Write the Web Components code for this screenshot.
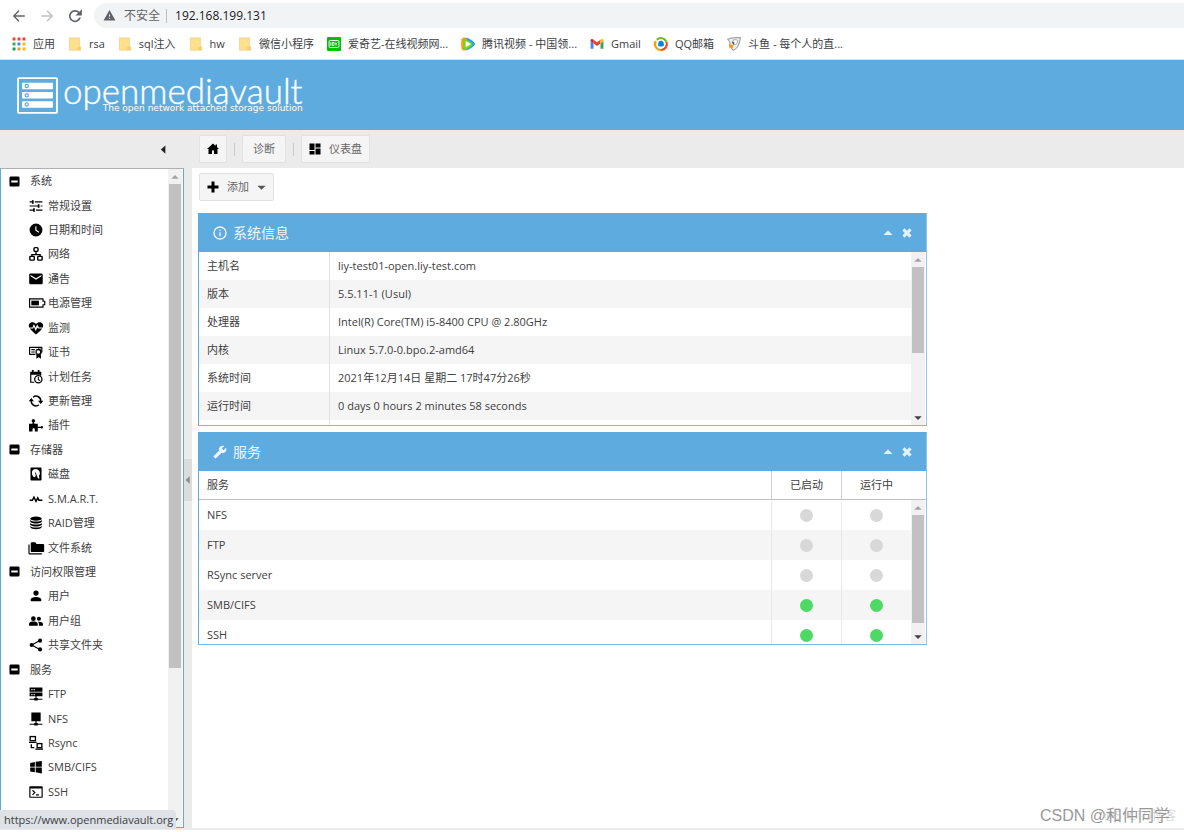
<!DOCTYPE html>
<html lang="zh-CN">
<head>
<meta charset="utf-8">
<title>openmediavault</title>
<style>
html,body{margin:0;height:100%}
body{font:11px/16px "Open Sans","Noto Sans CJK SC",sans-serif;color:#404040;background:#fff}
</style>
</head>
<body>
<omv-app></omv-app>
<script>
const ICONS = {
back:'<path fill="none" stroke="currentColor" stroke-width="2.4" d="M22 12H3M12 3l-9 9 9 9"/>',
forward:'<path fill="none" stroke="currentColor" stroke-width="2.4" d="M2 12h19M12 3l9 9-9 9"/>',
reload:'<path d="M17.65 6.35A8 8 0 1 0 19.73 14h-2.4A5.8 5.8 0 1 1 16 7.9L12.6 11.3H21V3z" transform="translate(-3.500 -3.500) scale(1.3)"/>',
warn:'<path d="M1 21h22L12 2zm12-3h-2v-2h2zm0-4h-2v-4h2z"/>',
apps:'<g><path fill="#ea4335" d="M1 1h5v5H1zM9.500 1h5v5h-5zM18 1h5v5h-5z"/><path fill="#34a853" d="M1 9.500h5v5H1z"/><path fill="#4285f4" d="M9.500 9.500h5v5h-5z"/><path fill="#fbbc05" d="M18 9.500h5v5h-5zM18 18h5v5h-5z"/><path fill="#0f9d58" d="M1 18h5v5H1z"/><path fill="#ea9a35" d="M9.500 18h5v5h-5z"/></g>',
bookfolder:'<path fill="#ffe18b" stroke="#e8c767" d="M2.500 1.500h17v15h2v6h-19z"/><path fill="#f5cf6b" d="M15.500 17h6v5.500h-6z"/>',
iqiyi:'<rect width="24" height="24" rx="2" fill="#00be06"/><rect x="3.500" y="6" width="17" height="12" rx="2" fill="none" stroke="#fff" stroke-width="1.600"/><path fill="none" stroke="#fff" stroke-width="1.500" d="M6.500 9v6M9 9.500h3v5H9zM14 9.500l1.500 2.500v3M17.500 9.500L15.500 12"/>',
tencent:'<path fill="#ff9a0a" d="M1 4C3 0 7 0 11 2l4 10-4 10c-4 2-8 2-10-2-1-5-1-11 0-16z"/><path fill="#20a5f5" d="M9 1c6 2 11 5 14 9 2 1 1 3 0 4-4 4-8 7-14 9l3-11z"/><path fill="#7bd322" d="M4 3c6 1 11 4 15 8v3C15 18 11 21 4 22z"/><path fill="#fff" d="M8 7l9 5-9 5.500z"/>',
gmail:'<path fill="#4285f4" d="M1 20h5V11L1 7z"/><path fill="#34a853" d="M18 20h5V7l-5 4z"/><path fill="#ea4335" d="M6 4.500l6 4.500 6-4.500V11l-6 4.500L6 11z"/><path fill="#c5221f" d="M1 5c1-2 3-2 5-.5V11L1 7z"/><path fill="#fbbc04" d="M18 4.500c2-1.500 5-1.500 5 2V7l-5 4z"/>',
qq:'<g fill="none" stroke-width="4"><path stroke="#f7a400" d="M12 22A10 10 0 0 1 3 7"/><path stroke="#6cba2d" d="M5 5A10 10 0 0 1 21 8"/><path stroke="#f14b20" d="M21 8a10 10 0 0 1-9 14"/></g><circle cx="12" cy="12" r="8" fill="#fff"/><path fill="#0c86d8" d="M12 6.500c4 0 5 4 5 7.500 0 3-10 3-10 0 0-4 1-7.500 5-7.500z"/>',
douyu:'<path fill="#eee" stroke="#777" stroke-width="1.400" d="M1 4c6-3 15-3 22-3-1 6-2 12-5 16-2 3-5 5-8 6-2-4-6-6-5-10 0-3 0-6-4-9z"/><path fill="#fff" stroke="#888" stroke-width="1.300" d="M10 6c3-2 7-2 8 0s-1 6-3 7c-3 1-6-2-5-7z"/><path fill="#e5a222" d="M3 12l8 2-2 7-5-3z"/><path fill="#555" d="M8 8l5 1-2 5z"/>',
home:'<path d="M12 1L0 12h3v10h7v-7h4v7h7V12h3l-4-4V3h-3v3z"/>',
dash:'<path d="M1 1h10v13H1zM13 1h10v8H13zM1 16h10v7H1zM13 11h10v12H13z"/>',
plus:'<path d="M9 1h6v8h8v6h-8v8H9v-8H1V9h8z"/>',
down:'<path d="M1 7h22L12 18z"/>',
left:'<path d="M17 1v22L5 12z"/>',
up:'<path d="M1 17h22L12 6z"/>',
info:'<path transform="translate(-1.800 -1.800) scale(1.150)" d="M11 9h2V7h-2zm1 11a8 8 0 1 1 0-16 8 8 0 0 1 0 16zm0-18a10 10 0 1 0 0 20 10 10 0 0 0 0-20zm-1 15h2v-6h-2z"/>',
wrench:'<path transform="matrix(-1 0 0 1 24 0)" d="M22.7 19l-9.1-9.1c.9-2.300.4-5-1.500-6.900-2-2-5-2.400-7.400-1.300L9 6 6 9 1.600 4.700C.4 7.100.9 10.100 2.900 12.100c1.900 1.900 4.600 2.400 6.900 1.500l9.100 9.100c.4.4 1 .4 1.400 0l2.300-2.300c.5-.4.5-1.100.1-1.400z"/>',
close:'<path stroke="currentColor" stroke-width="7.500" d="M3.500 3.500l17 17M20.500 3.500l-17 17"/>',
minus:'<path fill-rule="evenodd" d="M4 1h16a3 3 0 0 1 3 3v16a3 3 0 0 1-3 3H4a3 3 0 0 1-3-3V4a3 3 0 0 1 3-3zM5 10v4h14v-4z"/>',
tune:'<path d="M1 4h4V2h3v6H5V6H1zM10 4h13v2H10zM1 11h14V9h3v6h-3v-2H1zM20 11h3v2h-3zM1 18h6v-2h3v6H7v-2H1zM12 18h11v2H12z"/>',
clock:'<path d="M12 1a11 11 0 1 0 0 22 11 11 0 0 0 0-22zm4.500 15.500L10.800 13V6h2v6l4.800 2.900z"/>',
lan:'<g fill="none" stroke="currentColor" stroke-width="2.400"><path d="M12 8v5M5 17v-4h14v4"/><rect x="8.500" y="1" width="7" height="6.500" rx="2"/><rect x="1.500" y="16" width="7.500" height="6.500" rx="1"/><rect x="15" y="16" width="7.500" height="6.500" rx="1"/></g>',
mail:'<path d="M20 4H4a2 2 0 0 0-2 2v12a2 2 0 0 0 2 2h16a2 2 0 0 0 2-2V6a2 2 0 0 0-2-2zm0 4l-8 5-8-5V6l8 5 8-5z" transform="translate(-2 -2) scale(1.160)"/>',
battery:'<path d="M0 4h25v4h3v8h-3v4H0zm2 2v12h21v-4h3v-4h-3V6z" fill-rule="evenodd"/><path d="M4 8h13v8H4z"/>',
heart:'<path d="M12 23C6 18 3 15.500 1.500 13H7l1.500-3 3 7 3-6 1.500 2h6.500C21 16 17 19 12 23zM0 11C-2 2 7 0 12 5c5-5 14-3 12 6h-7l-3-5-2.500 5.500L8.300 5 6 11z"/>',
cert:'<path d="M1 3h21a1 1 0 0 1 1 1v9h-2V5H2v10h9v2H1a1 1 0 0 1-1-1V4a1 1 0 0 1 1-1z"/><path d="M4 7h6v2H4zM4 11h6v2H4zM16 5l1.500 1.500 2.500-.3.3 2.500 2 1.300-1 2 1 2-2 1 .3 8.500-4-2.500-4 2.500V15l-2-1 1-2-1-2 2-1 .1-2.500 2.500.3z"/><circle cx="16" cy="12" r="3" fill="#fff"/>',
calendar:'<path d="M5 0h3v3h7V0h3v3h3v7h-2V8H4v12h5v2H2V3h3z"/><circle cx="16" cy="16" r="6.200" fill="none" stroke="currentColor" stroke-width="2.200"/><path fill="none" stroke="currentColor" stroke-width="1.800" d="M16 12v4.500l3 1.500"/>',
sync:'<g fill="none" stroke="currentColor" stroke-width="2.500"><path d="M7 5.500A8 8 0 0 1 20 13"/><path d="M17 18.500A8 8 0 0 1 4 11"/></g><path d="M15.500 11.500H24.500L20 17zM-.5 12.500H8.500L4 7z"/>',
puzzle:'<path d="M0 10h6V7C4 6 4 2 7.500 2S11 6 9 7v3h6v5h5c1-2 4-1 4 1s-3 3-4 1h-5v6h-5v-4c0-2-4-2-4 0v4H0z"/>',
disk:'<path fill-rule="evenodd" d="M4 1h16a1.500 1.500 0 0 1 1.500 1.500v19A1.500 1.500 0 0 1 20 23H4a1.500 1.500 0 0 1-1.500-1.500v-19A1.500 1.500 0 0 1 4 1zm8 2.500a7 7 0 0 0-7 7c0 4 2.500 6.500 5.500 7l.5-3 5 5h2l-1-4.500A7 7 0 0 0 12 3.500z"/><path d="M11 9l4 9h-2l-3-8z"/>',
pulse:'<path fill="none" stroke="currentColor" stroke-width="2.500" d="M1 14h5l2.500-5 3.500 7 3-6 2 4h6"/>',
database:'<ellipse cx="12" cy="4.500" rx="10" ry="3.500"/><path d="M2 7c3 3.500 17 3.500 20 0v3c-3 4-17 4-20 0zM2 12c3 3.500 17 3.500 20 0v3c-3 4-17 4-20 0zM2 17c3 3.500 17 3.500 20 0v2c-2 5-18 5-20 0z"/>',
folders:'<path d="M5 2h6l2 3h11a2 2 0 0 1 2 2v10a2 2 0 0 1-2 2H5a2 2 0 0 1-2-2V4a2 2 0 0 1 2-2z"/><path d="M-1 6h2v15h21v2H1a2 2 0 0 1-2-2z"/>',
user:'<circle cx="12" cy="7" r="4.500"/><path d="M3 21v-3c0-3 4-4.500 9-4.500s9 1.500 9 4.500v3z"/>',
users:'<circle cx="7.500" cy="8" r="4"/><circle cx="17" cy="8" r="3.500"/><path d="M0 20v-3c0-3 4-4 7.500-4s7.500 1 7.500 4v3zM17 20v-3c0-2-1-3-2-3.800 4-.5 9 .8 9 3.800v3z"/>',
share:'<path fill="none" stroke="currentColor" stroke-width="2" d="M19 4L5 12l14 8"/><circle cx="19" cy="4.500" r="3.500"/><circle cx="4.500" cy="12" r="3.500"/><circle cx="19" cy="19.500" r="3.500"/>',
server:'<path fill-rule="evenodd" d="M1 1h22v7H1zm3 2.500v2h2v-2zm4 0v2h2v-2zM1 9.500h22v6.500H1zM4 12v2h2v-2zm4 0v2h2v-2zM11 16h2v3h2v1h8v2h-8v1H9v-1H1v-2h8v-1h2z"/>',
nas:'<path d="M4 1h16v15h-7v3h2v1h8v2h-8v1H9v-1H1v-2h8v-1h2v-3H4z"/>',
remote:'<g fill="none" stroke="currentColor" stroke-width="2.300"><rect x="2" y="1" width="9" height="7"/><path d="M0 11h13M4 14v6h5"/><rect x="14" y="13" width="8" height="7"/><path d="M11 22.500h13"/></g>',
windows:'<path d="M2 5l8-1.500v8H2zM11.500 3.200L22 1.500v10H11.500zM2 13h8v8l-8-1.500zM11.500 13H22v10l-10.500-1.800z"/>',
terminal:'<path fill-rule="evenodd" d="M2 2h20a1.500 1.500 0 0 1 1.500 1.500v17A1.500 1.500 0 0 1 22 22H2a1.500 1.500 0 0 1-1.500-1.500v-17A1.500 1.500 0 0 1 2 2zm.5 4v14h19V6z"/><path fill="none" stroke="currentColor" stroke-width="2" d="M6 9l4 4-4 4M12 17h5"/>',
logo:'<rect x="1" y="1" width="38" height="34" rx="1" fill="none" stroke="#fff" stroke-width="1.800"/><path fill="#fff" d="M5 5.500h30V12H5zM5 14.500h30V21H5zM5 23.500h30V30H5z"/><g fill="none" stroke="#5dabdf" stroke-width="1.200"><circle cx="9.500" cy="8.700" r="1.600"/><circle cx="9.500" cy="17.700" r="1.600"/><circle cx="9.500" cy="26.700" r="1.600"/></g>'
};
/* Elements with fixed markup. */
function define(name, html){
  customElements.define(name, class extends HTMLElement{
    constructor(){
      super();
      const t=document.createElement('template');
      t.innerHTML=html;
      this.attachShadow({mode:'open'}).append(t.content.cloneNode(true));
    }
  });
}
/* Elements whose markup depends on attributes render when connected. */
function defineLive(name, html){
  customElements.define(name, class extends HTMLElement{
    connectedCallback(){
      if(!this.shadowRoot) this.attachShadow({mode:'open'}).innerHTML=html(this);
    }
  });
}
defineLive('omv-icon', el=>`<style>:host{display:inline-block;flex:none;width:14px;height:14px}svg{display:block;width:100%;height:100%;overflow:visible}</style><svg viewBox="${el.getAttribute('box')||'0 0 24 24'}" fill="currentColor" aria-hidden="true">${ICONS[el.getAttribute('name')]}</svg>`);

defineLive('omv-scrollbar', el=>`<style>
:host{display:flex;flex-direction:column;box-sizing:border-box;width:15px;background:#f1f1f1;border-right:1px solid #fff;padding:0 1px;align-items:center}
omv-icon{width:8px;height:8px;margin:4px 0 3px;color:#a3a3a3}
omv-icon.end{color:#404040}
.track{flex:1;align-self:stretch;min-height:0}
.thumb{background:#c1c1c1;height:${el.getAttribute('size')}}
</style><omv-icon name="up"></omv-icon><div class="track"><div class="thumb"></div></div><omv-icon class="end" name="down"></omv-icon>`);

defineLive('bookmark-link', el=>`<style>
:host{display:block;flex:none}
a{display:flex;align-items:center;gap:7px;color:#3c4043;text-decoration:none;white-space:nowrap}
omv-icon{width:14px;height:14px}
</style><a href="#"><omv-icon name="${el.getAttribute('icon')}"></omv-icon><span><slot></slot></span></a>`);

define('browser-chrome', `<style>
:host{display:block;border-bottom:1px solid #e0e0e0;color:#5f6368}
.nav{display:flex;align-items:center;height:31px;padding-left:12px}
button{border:0;background:none;padding:0;color:inherit;display:flex}
.nav button{margin-right:14px}
button.off{color:#bdc1c6}
.pill{flex:1;display:flex;align-items:center;height:25px;background:#f1f3f4;border-radius:13px 0 0 13px;padding-left:9px;font-size:12px;margin-left:-2px}
.pill omv-icon{width:13px;height:13px}
label{margin:0 6px 0 8px;white-space:nowrap}
input{flex:1;border:0;border-left:1px solid #bdc1c6;background:none;padding:0 0 0 8px;font:12px/14px "Open Sans","Noto Sans CJK SC",sans-serif;color:#202124;outline:0;height:14px;min-width:0}
.marks{display:flex;align-items:center;height:26px;padding:0 12px 2px;gap:13px;overflow:hidden}
</style>
<div class="nav"><button aria-label="后退"><omv-icon name="back"></omv-icon></button><button class="off" aria-label="前进"><omv-icon name="forward"></omv-icon></button><button aria-label="刷新"><omv-icon name="reload"></omv-icon></button>
<div class="pill"><omv-icon name="warn"></omv-icon><label for="url">不安全</label><input id="url" value="192.168.199.131"></div></div>
<nav class="marks">
<bookmark-link icon="apps">应用</bookmark-link>
<bookmark-link icon="bookfolder">rsa</bookmark-link>
<bookmark-link icon="bookfolder">sql注入</bookmark-link>
<bookmark-link icon="bookfolder">hw</bookmark-link>
<bookmark-link icon="bookfolder">微信小程序</bookmark-link>
<bookmark-link icon="iqiyi">爱奇艺-在线视频网...</bookmark-link>
<bookmark-link icon="tencent">腾讯视频 - 中国领...</bookmark-link>
<bookmark-link icon="gmail">Gmail</bookmark-link>
<bookmark-link icon="qq">QQ邮箱</bookmark-link>
<bookmark-link icon="douyu">斗鱼 - 每个人的直...</bookmark-link>
</nav>`);

define('omv-header', `<style>
:host{display:block;background:#5dabdf;color:#fff;height:70px}
a{display:flex;width:max-content;align-items:flex-start;gap:5px;padding:17px 17px 0;color:inherit;text-decoration:none}
omv-icon{width:41px;height:37px}
.name{display:block;font:300 35px/26px Lato,sans-serif;-webkit-text-stroke:.4px #fff}
.tag{display:block;font:9px/10px "DejaVu Sans",sans-serif;text-align:right}
</style><a href="#"><omv-icon name="logo" box="0 0 40 36"></omv-icon><span><span class="name">openmediavault</span><span class="tag">The open network attached storage solution</span></span></a>`);

defineLive('omv-button', el=>`<style>
:host{display:block;flex:none}
button{display:flex;align-items:center;gap:8px;height:28px;padding:0 ${el.getAttribute('pad')||7}px;border:1px solid #e1e1e1;border-radius:2px;background:#f5f5f5;font:11px/16px "Open Sans","Noto Sans CJK SC",sans-serif;color:#666}
omv-icon{color:#000;width:12px;height:12px}
omv-icon.arrow{color:#555;width:9px;height:9px}
</style><button aria-label="${el.getAttribute('label')||el.textContent}">${el.hasAttribute('icon')?`<omv-icon name="${el.getAttribute('icon')}"></omv-icon>`:''}${el.textContent?'<span><slot></slot></span>':''}${el.hasAttribute('menu')?'<omv-icon class="arrow" name="down"></omv-icon>':''}</button>`);

define('omv-toolbar', `<style>
:host{display:flex;align-items:center;height:38px;background:#ebebeb}
.side{width:192px;display:flex;justify-content:flex-end}
.side button{border:0;padding:0;background:none;margin-right:24px;color:#222;display:flex}
.side omv-icon{width:9px;height:9px}
nav{display:flex;align-items:center;gap:7px;padding-left:7px}
i{width:1px;height:13px;background:#ccc}
</style><div class="side"><button aria-label="折叠"><omv-icon name="left"></omv-icon></button></div>
<nav><omv-button icon="home" label="主页"></omv-button><i></i><omv-button pad="10">诊断</omv-button><i></i><omv-button icon="dash">仪表盘</omv-button></nav>`);

defineLive('tree-row', el=>{
  const g=el.hasAttribute('group');
  return `<style>
:host{display:block;min-height:0}
a{height:100%;display:flex;align-items:center;color:#404040;text-decoration:none;white-space:nowrap;padding-left:${g?8:28}px;gap:${g?10:5}px}
omv-icon{color:#000;width:${g?11:14}px;height:${g?11:14}px}
</style><a href="#"><omv-icon name="${g?'minus':el.getAttribute('icon')}"></omv-icon><span><slot></slot></span></a>`});

define('omv-sidebar', `<style>
:host{display:flex;box-sizing:border-box;width:184px;flex:none;border:1px solid #5dabdf;border-top-color:#b0b0b0;background:#fff}
nav{flex:1;min-width:0;display:grid;grid-template-rows:repeat(26,1fr);padding-bottom:23px}
</style><nav>
${[['系统'],['常规设置','tune'],['日期和时间','clock'],['网络','lan'],['通告','mail'],['电源管理','battery'],['监测','heart'],['证书','cert'],['计划任务','calendar'],['更新管理','sync'],['插件','puzzle'],
['存储器'],['磁盘','disk'],['S.M.A.R.T.','pulse'],['RAID管理','database'],['文件系统','folders'],['访问权限管理'],['用户','user'],['用户组','users'],['共享文件夹','share'],
['服务'],['FTP','server'],['NFS','nas'],['Rsync','remote'],['SMB/CIFS','windows'],['SSH','terminal']].map(([t,i])=>i?`<tree-row icon="${i}">${t}</tree-row>`:`<tree-row group>${t}</tree-row>`).join('')}
</nav><omv-scrollbar size="77%"></omv-scrollbar>`);

defineLive('omv-panel', el=>`<style>
:host{display:block;border:1px solid #5dabdf;border-right-color:#8cc5ea;border-bottom-color:#7bbce6;background:#fff}
header{display:flex;align-items:center;height:38px;background:#5dabdf;color:#f0f7fc;padding:0 14px}
h2{flex:1;margin:0;font-size:14px;line-height:20px;font-weight:400}
header>omv-icon{margin-right:6px}
button{border:0;background:none;padding:0;margin-left:9px;color:#e4f1fa;display:flex}
button omv-icon{width:10px;height:10px}
</style><header><omv-icon name="${el.getAttribute('icon')}"></omv-icon><h2>${el.getAttribute('heading')}</h2><button aria-label="收起"><omv-icon name="up"></omv-icon></button><button aria-label="关闭"><omv-icon name="close"></omv-icon></button></header><slot></slot>`);

define('system-info', `<style>
:host{display:flex;height:173px;overflow:hidden}
.view{flex:1;overflow:hidden}
table{width:100%;border-collapse:collapse;table-layout:fixed}
th,td{height:28px;padding:0 8px;font-weight:400;text-align:left;white-space:nowrap}
th{width:114px;border-right:1px solid #e1e1e1}
tr:nth-child(even){background:#f5f5f5}
</style><div class="view"><table>
<tr><th scope="row">主机名</th><td>liy-test01-open.liy-test.com</td></tr>
<tr><th scope="row">版本</th><td>5.5.11-1 (Usul)</td></tr>
<tr><th scope="row">处理器</th><td>Intel(R) Core(TM) i5-8400 CPU @ 2.80GHz</td></tr>
<tr><th scope="row">内核</th><td>Linux 5.7.0-0.bpo.2-amd64</td></tr>
<tr><th scope="row">系统时间</th><td>2021年12月14日 星期二 17时47分26秒</td></tr>
<tr><th scope="row">运行时间</th><td>0 days 0 hours 2 minutes 58 seconds</td></tr>
<tr><th scope="row"></th><td></td></tr>
</table></div><omv-scrollbar size="60%"></omv-scrollbar>`);

define('service-list', `<style>
:host{display:flex;height:173px;overflow:hidden}
.view{flex:1;overflow:hidden}
table{width:100%;border-collapse:separate;border-spacing:0;table-layout:fixed}
th,td{box-sizing:border-box;height:30px;padding:0 8px;font-weight:400;text-align:left;border-left:1px solid #e8e8e8}
th{height:29px;border-bottom:1px solid #c0c0c0;border-left-color:#d0d0d0}
th:first-child,td:first-child{border-left:0}
th+th,td+td{width:70px;text-align:center}
tbody tr:nth-child(even){background:#f5f5f5}
i{display:block;width:13px;height:13px;border-radius:50%;background:#d8d8d8;margin:auto}
i.on{background:#4cd964}
.side{display:flex;flex-direction:column}
.side b{height:28px;border-bottom:1px solid #c0c0c0}
omv-scrollbar{flex:1}
</style><div class="view"><table><thead><tr><th>服务</th><th>已启动</th><th>运行中</th></tr></thead><tbody>
${[['NFS',0],['FTP',0],['RSync server',0],['SMB/CIFS',1],['SSH',1]].map(([n,on])=>{const d=`<td><i class="${on?'on':''}"></i></td>`;return `<tr><td>${n}</td>${d}${d}</tr>`}).join('')}
</tbody></table></div><div class="side"><b></b><omv-scrollbar size="95%"></omv-scrollbar></div>`);

define('omv-splitter', `<style>
:host{display:flex;flex-direction:column;justify-content:center;width:8px;flex:none;background:#ebebeb}
button{border:0;padding:0;width:8px;height:42px;background:#dcdcdc;color:#888;display:flex;align-items:center;margin-bottom:36px}
omv-icon{width:8px;height:8px}
</style><button aria-label="折叠导航"><omv-icon name="left"></omv-icon></button>`);

define('omv-app', `<style>
:host{display:flex;flex-direction:column;min-height:100vh;box-sizing:border-box;padding-bottom:2px;position:relative}
.body{flex:1;display:flex;border-bottom:2px solid #ebebeb}
main{flex:1;min-width:0;padding:5px 6px}
.tools{display:flex;padding:0 1px 12px}
.column{display:flex;flex-direction:column;gap:6px;max-width:729px}
.status{position:absolute;left:0;bottom:3px;height:19px;padding:0 3px 0 4px;background:#dee1e6;border-radius:0 4px 0 0;line-height:19px;color:#3c4043}
.mark,.ghost{position:absolute;white-space:nowrap}
.mark{right:14px;bottom:5px;font:16px/22px "Liberation Sans","Noto Sans CJK SC",sans-serif;color:#999}
.ghost{right:8px;bottom:5px;font-size:12px;line-height:22px;color:#d8d8d8}
</style>
<browser-chrome></browser-chrome><omv-header></omv-header><omv-toolbar></omv-toolbar>
<div class="body"><omv-sidebar></omv-sidebar><omv-splitter></omv-splitter>
<main><div class="tools"><omv-button icon="plus" menu>添加</omv-button></div>
<div class="column"><omv-panel icon="info" heading="系统信息"><system-info></system-info></omv-panel>
<omv-panel icon="wrench" heading="服务"><service-list></service-list></omv-panel></div></main></div>
<div class="status">https://www.openmediavault.org</div><span class="ghost">@51CTO博客</span><span class="mark">CSDN @和仲同学</span>`);
</script>
</body>
</html>
